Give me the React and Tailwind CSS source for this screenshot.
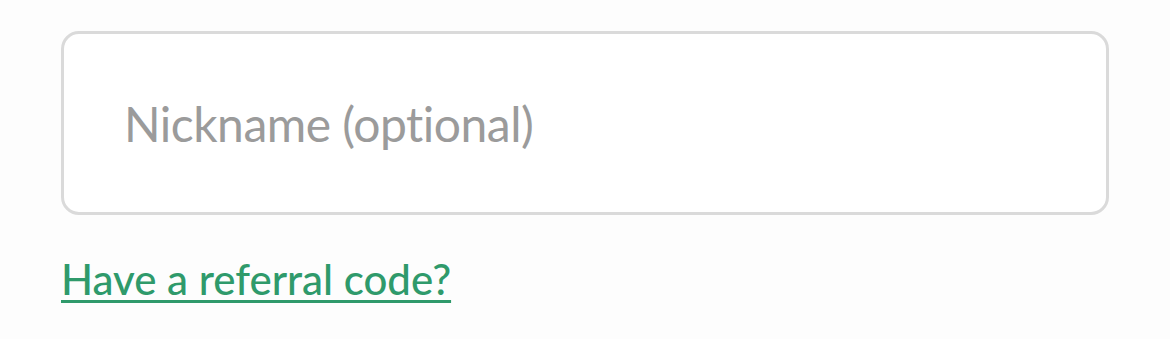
export default function App() {
  return (
    <div className="min-h-screen bg-[#fdfdfd] px-[61px] pt-[31px] font-['Lato','Liberation_Sans',sans-serif]">
      <input
        type="text"
        placeholder="Nickname (optional)"
        className="block h-[184px] w-[1048px] rounded-[18px] border-[3px] border-[#dadada] bg-white pl-[60px] text-[48px] tracking-[-0.5px] text-gray-700 placeholder:text-[#9b9b9b] focus:outline-none"
      />
      <a
        href="#"
        className="mt-[36px] inline-block text-[42px] font-medium leading-[56px] text-[#2f9a6b] underline decoration-[3px] underline-offset-[5px]"
      >
        Have a referral code?
      </a>
    </div>
  );
}
